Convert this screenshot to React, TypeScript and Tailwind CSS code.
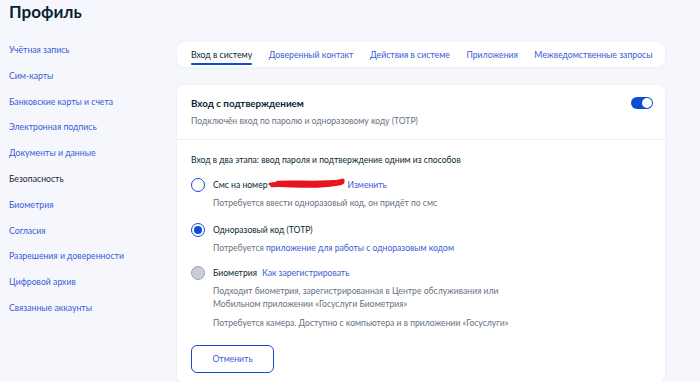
import React from 'react'

const sideItems = [
    'Учётная запись',
    'Сим-карты',
    'Банковские карты и счета',
    'Электронная подпись',
    'Документы и данные',
    'Безопасность',
    'Биометрия',
    'Согласия',
    'Разрешения и доверенности',
    'Цифровой архив',
    'Связанные аккаунты',
]

const tabs = ['Вход в систему', 'Доверенный контакт', 'Действия в системе', 'Приложения', 'Межведомственные запросы']

const Radio = ({ state }: { state: 'off' | 'on' | 'disabled' }) => {
    if (state === 'on') {
        return (
            <span className="flex h-[14px] w-[14px] shrink-0 items-center justify-center rounded-full border-[1.5px] border-[#0d4cd3]">
                <span className="h-[8px] w-[8px] rounded-full bg-[#0d4cd3]" />
            </span>
        )
    }
    if (state === 'disabled') {
        return <span className="h-[14px] w-[14px] shrink-0 rounded-full border border-[#9aa3b3] bg-[#c9ced8]" />
    }
    return <span className="h-[14px] w-[14px] shrink-0 rounded-full border-[1.5px] border-[#0d4cd3] bg-white" />
}

export default function App() {
    return (
        <div className="flex h-[382px] w-[700px] overflow-hidden bg-[#f5f7fc] text-[#0b1f33]" style={{ fontFamily: 'Lato, "Noto Sans", sans-serif' }}>
            <aside className="w-[177px] shrink-0 pl-[9px]">
                <h1 className="mt-[1px] text-[17px] font-bold leading-[22px] text-[#0b1f33]">Профиль</h1>
                <nav className="mt-[21px] flex flex-col">
                    {sideItems.map(item => (
                        <div
                            key={item}
                            className={`h-[25.8px] whitespace-nowrap text-[8.7px] leading-[12px] ${item === 'Безопасность' ? 'text-[#1c2533]' : 'text-[#3b5bd6]'}`}
                        >
                            {item}
                        </div>
                    ))}
                </nav>
            </aside>

            <main className="w-[488px] shrink-0 pt-[42px]">
                {/* tabs */}
                <div className="flex h-[25px] items-stretch gap-[16.5px] rounded-lg bg-white px-[14px] shadow-[0_1px_4px_rgba(40,60,110,0.06)]">
                    {tabs.map((t, i) => (
                        <div
                            key={t}
                            className={`relative flex items-center whitespace-nowrap text-[8.7px] ${i === 0 ? 'text-[#0b1f33]' : 'text-[#3b5bd6]'}`}
                        >
                            {t}
                            {i === 0 && <span className="absolute bottom-[2px] left-0 right-0 h-[2px] rounded bg-[#0d4cd3]" />}
                        </div>
                    ))}
                </div>

                {/* main card */}
                <div className="mt-[18px] rounded-lg bg-white shadow-[0_1px_4px_rgba(40,60,110,0.06)]">
                    <div className="flex items-start justify-between border-b border-[#eef1f6] pb-[12px] pl-[14px] pr-[12px] pt-[12px]">
                        <div>
                            <div className="text-[9.8px] font-bold leading-[13px] text-[#0b1f33]">Вход с подтверждением</div>
                            <div className="mt-[5px] text-[8.6px] leading-[12px] text-[#66727f]">
                                Подключён вход по паролю и одноразовому коду (TOTP)
                            </div>
                        </div>
                        <div className="flex h-[12px] w-[22px] items-center justify-end rounded-full bg-[#0d4cd3] px-[1px]">
                            <span className="h-[10px] w-[10px] rounded-full bg-white" />
                        </div>
                    </div>

                    <div className="px-[14px] pb-[10px] pt-[14px]">
                        <div className="text-[8.6px] leading-[12px] text-[#0b1f33]">
                            Вход в два этапа: ввод пароля и подтверждение одним из способов
                        </div>

                        <div className="mt-[12px] flex items-center gap-[8px]">
                            <Radio state="off" />
                            <span className="whitespace-nowrap text-[8.6px] leading-[12px] text-[#0b1f33]">Смс на номер</span>
                            <span className="relative h-[12px] w-[64px]">
                                <svg className="absolute left-[-8px] top-[-3px]" width="78" height="16" viewBox="0 0 84 16">
                                    <path
                                        d="M2 8 C 12 6, 22 7, 32 8 S 55 10, 70 6 S 80 4, 81 6 M4 10 C 20 9, 40 12, 60 10 S 76 8, 80 7 M10 6 C 30 5, 50 7, 78 5"
                                        stroke="#e8141c"
                                        strokeWidth="3"
                                        fill="none"
                                        strokeLinecap="round"
                                    />
                                </svg>
                            </span>
                            <span className="text-[8.6px] leading-[12px] text-[#3b5bd6]">Изменить</span>
                        </div>
                        <div className="mt-[5px] pl-[22px] text-[8.6px] leading-[12px] text-[#66727f]">
                            Потребуется ввести одноразовый код, он придёт по смс
                        </div>

                        <div className="mt-[14px] flex items-center gap-[8px]">
                            <Radio state="on" />
                            <span className="text-[8.6px] leading-[12px] text-[#0b1f33]">Одноразовый код (TOTP)</span>
                        </div>
                        <div className="mt-[5px] pl-[22px] text-[8.6px] leading-[12px] text-[#66727f]">
                            Потребуется <span className="text-[#3b5bd6]">приложение для работы с одноразовым кодом</span>
                        </div>

                        <div className="mt-[12px] flex items-center gap-[8px]">
                            <Radio state="disabled" />
                            <span className="text-[8.6px] leading-[12px] text-[#0b1f33]">Биометрия</span>
                            <span className="ml-[-3px] text-[8.6px] leading-[12px] text-[#3b5bd6]">Как зарегистрировать</span>
                        </div>
                        <div className="mt-[5px] pl-[22px] text-[8.6px] leading-[13px] text-[#66727f]">
                            Подходит биометрия, зарегистрированная в Центре обслуживания или
                            <br />
                            Мобильном приложении «Госуслуги Биометрия»
                        </div>
                        <div className="mt-[6px] pl-[22px] text-[8.6px] leading-[13px] text-[#66727f]">
                            Потребуется камера. Доступно с компьютера и в приложении «Госуслуги»
                        </div>

                        <button className="mt-[15px] flex h-[28px] w-[83px] items-center justify-center rounded-md border-[1.5px] border-[#0d4cd3] bg-white text-[8.6px] text-[#3b5bd6]">
                            Отменить
                        </button>
                    </div>
                </div>
            </main>
        </div>
    )
}
